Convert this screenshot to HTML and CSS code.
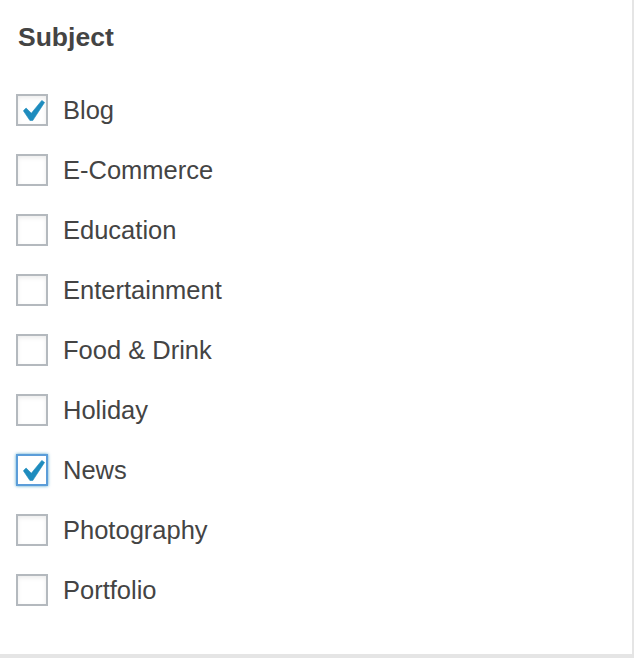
FILE: index.html
```html
<!DOCTYPE html>
<html>
<head>
<meta charset="utf-8">
<link rel="stylesheet" href="styles.css">
</head>
<body>
<div class="panel">
  <h2 class="title">Subject</h2>
  <ul class="list">
    <li class="row"><span class="box checked"><svg viewBox="5.6 4.7 10.8 9.7" width="22" height="21" preserveAspectRatio="none"><path d="M14.83 4.89l1.34.94-5.81 8.38H9.02L5.78 9.67l1.34-1.25 2.57 2.4z" fill="#1e8cbe" stroke="#1e8cbe" stroke-width="0.3" stroke-linejoin="round"/></svg></span><span class="label">Blog</span></li>
    <li class="row"><span class="box"></span><span class="label">E-Commerce</span></li>
    <li class="row"><span class="box"></span><span class="label">Education</span></li>
    <li class="row"><span class="box"></span><span class="label">Entertainment</span></li>
    <li class="row"><span class="box"></span><span class="label">Food &amp; Drink</span></li>
    <li class="row"><span class="box"></span><span class="label">Holiday</span></li>
    <li class="row"><span class="box checked focus"><svg viewBox="5.6 4.7 10.8 9.7" width="22" height="21" preserveAspectRatio="none"><path d="M14.83 4.89l1.34.94-5.81 8.38H9.02L5.78 9.67l1.34-1.25 2.57 2.4z" fill="#1e8cbe" stroke="#1e8cbe" stroke-width="0.3" stroke-linejoin="round"/></svg></span><span class="label">News</span></li>
    <li class="row"><span class="box"></span><span class="label">Photography</span></li>
    <li class="row"><span class="box"></span><span class="label">Portfolio</span></li>
  </ul>
</div>
</body>
</html>
```
FILE: styles.css
```css
html, body {
  margin: 0;
  padding: 0;
  background: #e5e5e5;
}
body {
  width: 634px;
  height: 658px;
  font-family: "Liberation Sans", Arial, sans-serif;
  color: #444;
}
.panel {
  width: 616px;
  height: 654px;
  background: #fff;
  padding: 0 0 0 16px;
  box-sizing: content-box;
}
.title {
  margin: 0;
  padding: 22px 0 0 2px;
  font-size: 26.5px;
  line-height: 30px;
  font-weight: bold;
  color: #444;
}
.list {
  list-style: none;
  margin: 28px 0 0;
  padding: 0;
}
.row {
  display: flex;
  align-items: center;
  height: 60px;
}
.box {
  width: 28px;
  height: 28px;
  border: 2px solid #b4b9be;
  background: #fff;
  box-shadow: inset 0 2px 4px rgba(0,0,0,0.08);
  display: block;
  flex: none;
}
.box svg {
  display: block;
  margin: 4px 0 0 5px;
}
.box.focus {
  border-color: #5b9dd9;
  box-shadow: 0 0 3px rgba(30,140,190,0.8);
}
.label {
  margin-left: 15px;
  font-size: 25.5px;
  line-height: 30px;
  color: #444;
}
```
